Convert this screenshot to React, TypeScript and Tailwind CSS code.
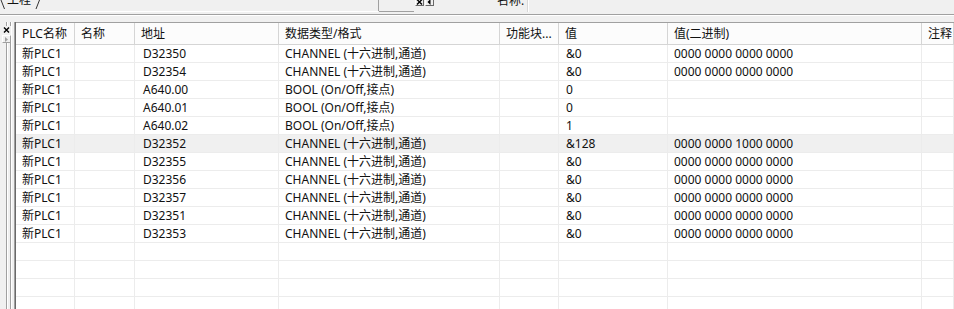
import React from "react";

type Row = {
  plc: string;
  addr: string;
  type: string;
  value: string;
  bin: string;
  selected?: boolean;
};

const CH = "CHANNEL (十六进制,通道)";
const BOOL = "BOOL (On/Off,接点)";
const ZERO = "0000 0000 0000 0000";

const rows: Row[] = [
  { plc: "新PLC1", addr: "D32350", type: CH, value: "&0", bin: ZERO },
  { plc: "新PLC1", addr: "D32354", type: CH, value: "&0", bin: ZERO },
  { plc: "新PLC1", addr: "A640.00", type: BOOL, value: "0", bin: "" },
  { plc: "新PLC1", addr: "A640.01", type: BOOL, value: "0", bin: "" },
  { plc: "新PLC1", addr: "A640.02", type: BOOL, value: "1", bin: "" },
  {
    plc: "新PLC1",
    addr: "D32352",
    type: CH,
    value: "&128",
    bin: "0000 0000 1000 0000",
    selected: true,
  },
  { plc: "新PLC1", addr: "D32355", type: CH, value: "&0", bin: ZERO },
  { plc: "新PLC1", addr: "D32356", type: CH, value: "&0", bin: ZERO },
  { plc: "新PLC1", addr: "D32357", type: CH, value: "&0", bin: ZERO },
  { plc: "新PLC1", addr: "D32351", type: CH, value: "&0", bin: ZERO },
  { plc: "新PLC1", addr: "D32353", type: CH, value: "&0", bin: ZERO },
];

const headers = [
  "PLC名称",
  "名称",
  "地址",
  "数据类型/格式",
  "功能块...",
  "值",
  "值(二进制)",
  "注释",
];

const grid =
  "grid grid-cols-[59px_60px_144px_221px_59px_109px_254px_1fr]";

function TinyButton({ children }: { children: React.ReactNode }) {
  return (
    <div className="flex h-[8px] w-[9px] items-center justify-center border border-t-white border-l-white border-r-[#696969] border-b-[#696969] bg-[#f0f0f0]">
      {children}
    </div>
  );
}

function Cell({
  text,
  className = "",
}: {
  text: string;
  className?: string;
}) {
  return (
    <div
      className={`overflow-hidden whitespace-nowrap border-r border-[#ececec] pl-[6px] ${className}`}
    >
      {text}
    </div>
  );
}

export default function App() {
  return (
    <div
      className="relative h-[309px] w-[954px] overflow-hidden bg-[#f0f0f0] text-[12px] text-[#111]"
      style={{ fontFamily: '"Noto Sans", "Noto Sans CJK SC", sans-serif' }}
    >
      {/* top strip, cut off by the window edge */}
      <div className="relative h-[14px]">
        <svg
          className="absolute left-0 top-0"
          width="954"
          height="14"
          viewBox="0 0 954 14"
        >
          <path d="M1 0 L4.5 9" stroke="#333" strokeWidth="1" fill="none" />
          <path d="M39.5 0 L36 9" stroke="#333" strokeWidth="1" fill="none" />
          <path d="M40 11.5 H378" stroke="#fff" />
          <path d="M378.5 0 V11" stroke="#a0a0a0" />
          <path d="M379 11.5 H414" stroke="#a0a0a0" />
          <path d="M527.5 0 V12" stroke="#d8d8d8" />
          <path d="M528.5 0 V12" stroke="#fff" />
        </svg>
        <span className="absolute left-[7px] top-[-8px] leading-[16px]">
          工程
        </span>
        <div className="absolute left-[415px] top-[-2px] flex gap-[1px]">
          <TinyButton>
            <svg width="7" height="6" viewBox="0 0 7 6">
              <path d="M1 0.5 L6 5.5 M6 0.5 L1 5.5" stroke="#000" strokeWidth="1.4" />
            </svg>
          </TinyButton>
          <TinyButton>
            <svg width="5" height="6" viewBox="0 0 5 6">
              <path d="M3.5 0 L0.5 3 L3.5 6 Z" fill="#000" />
            </svg>
          </TinyButton>
        </div>
        <span className="absolute left-[497px] top-[-7px] leading-[16px]">
          名称:
        </span>
      </div>
      <div className="h-[1px] bg-[#a0a0a0]" />
      <div className="h-[1px] bg-white" />
      <div className="h-[6px]" />

      <div className="flex h-[287px]">
        {/* left docking strip */}
        <div className="relative w-[16px] shrink-0">
          <div className="absolute left-[6px] top-0 h-full w-[1px] bg-[#a0a0a0]" />
          <div className="absolute left-[7px] top-0 h-full w-[1px] bg-white" />
          <div className="absolute left-[10px] top-0 h-full w-[1px] bg-[#a0a0a0]" />
          <div className="absolute left-[11px] top-0 h-full w-[1px] bg-white" />
          <div className="absolute left-[14px] top-0 h-full w-[1px] bg-[#a0a0a0]" />
          <div className="absolute left-[15px] top-0 h-full w-[1px] bg-[#696969]" />
          <div className="absolute left-[2px] top-[4px] flex flex-col gap-[1px] bg-[#f0f0f0]">
            <div className="flex h-[8px] w-[9px] items-center justify-center">
              <svg width="7" height="6" viewBox="0 0 7 6">
                <path d="M1 0.5 L6 5.5 M6 0.5 L1 5.5" stroke="#000" strokeWidth="1.4" />
              </svg>
            </div>
            <div className="flex h-[8px] w-[9px] items-center justify-center border border-t-white border-l-white border-r-[#a0a0a0] border-b-[#a0a0a0]">
              <svg width="3" height="5" viewBox="0 0 3 5">
                <path d="M0 0 L3 2.5 L0 5 Z" fill="#a0a0a0" />
              </svg>
            </div>
          </div>
        </div>

        {/* data table */}
        <div className="flex-1 overflow-hidden bg-white">
          <div
            className={`${grid} h-[23px] items-center border-t border-b border-t-[#a0a0a0] border-b-[#d5d5d5] bg-[#fcfcfc]`}
          >
            {headers.map((h) => (
              <div
                key={h}
                className="flex h-full items-center overflow-hidden whitespace-nowrap border-r border-[#d5d5d5] pl-[6px]"
              >
                {h}
              </div>
            ))}
          </div>
          {rows.map((r, i) => (
            <div
              key={i}
              className={`${grid} h-[18px] items-stretch border-b border-[#ececec] leading-[17px] ${
                r.selected ? "bg-[#f0f0f0]" : ""
              }`}
            >
              <Cell text={r.plc} className="pl-[4px]" />
              <Cell text="" />
              <Cell text={r.addr} className="pl-[8px]" />
              <Cell text={r.type} />
              <Cell text="" />
              <Cell text={r.value} className="pl-[7px]" />
              <Cell text={r.bin} />
              <Cell text="" />
            </div>
          ))}
          {[0, 1, 2, 3].map((i) => (
            <div
              key={`e${i}`}
              className={`${grid} h-[18px] border-b border-[#ececec]`}
            >
              {headers.map((h) => (
                <Cell key={h} text="" />
              ))}
            </div>
          ))}
        </div>
      </div>
    </div>
  );
}
